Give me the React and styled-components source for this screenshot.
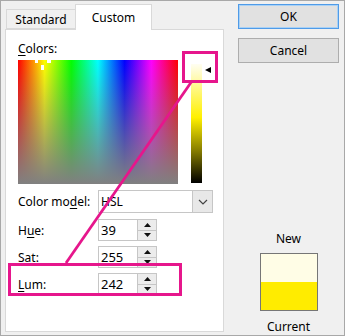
import React from 'react';
import styled, {createGlobalStyle} from 'styled-components';

const PINK = '#e6168c';

const App = () => {
  return (
    <Dialog>
      <GlobalStyle />
      <TabArea>
        <TabStrip>
          <Tab>Standard</Tab>
          <Tab active>Custom</Tab>
        </TabStrip>
        <Panel>
          <Label><u>C</u>olors:</Label>
          <PickerRow>
            <Spectrum>
              <Cross style={{left: 17, top: 0, width: 3, height: 3}} />
              <Cross style={{left: 29, top: 0, width: 4, height: 3}} />
              <Cross style={{left: 23, top: 5, width: 3, height: 5}} />
            </Spectrum>
            <LumBar />
            <LumArrow />
          </PickerRow>
          <ModelRow>
            <FieldLabel>Color mo<u>d</u>el:</FieldLabel>
            <Select>
              <SelectText>HSL</SelectText>
              <DropButton>
                <svg width="10" height="6" viewBox="0 0 10 6">
                  <path d="M1 1 L5 5 L9 1" fill="none" stroke="#444" strokeWidth="1.2" />
                </svg>
              </DropButton>
            </Select>
          </ModelRow>
          <Fields>
            <Spin label={<>H<u>u</u>e:</>} value="39" />
            <Spin label={<><u>S</u>at:</>} value="255" />
            <Spin label={<><u>L</u>um:</>} value="242" />
          </Fields>
        </Panel>
      </TabArea>
      <Side>
        <Button primary>OK</Button>
        <Button>Cancel</Button>
        <Preview>
          <PreviewLabel>New</PreviewLabel>
          <Swatch>
            <SwatchHalf color="#fffde6" />
            <SwatchHalf color="#ffec00" />
          </Swatch>
          <PreviewLabel>Current</PreviewLabel>
        </Preview>
      </Side>
      <Annotations width="345" height="336" viewBox="0 0 345 336">
        <rect x="183.5" y="52.5" width="33" height="29" fill="none" stroke={PINK} strokeWidth="3" />
        <rect x="9.5" y="264.5" width="171" height="30" fill="none" stroke={PINK} strokeWidth="3" />
        <line x1="66" y1="263" x2="192" y2="81" stroke={PINK} strokeWidth="2.8" />
      </Annotations>
    </Dialog>
  );
};

const Spin = ({label, value}) => (
  <FieldRow>
    <FieldLabel>{label}</FieldLabel>
    <SpinBox>
      <SpinText>{value}</SpinText>
      <SpinButtons>
        <SpinBtn>
          <svg width="7" height="4" viewBox="0 0 7 4"><path d="M0 4 L3.5 0 L7 4 Z" fill="#111" /></svg>
        </SpinBtn>
        <SpinBtn>
          <svg width="7" height="4" viewBox="0 0 7 4"><path d="M0 0 L3.5 4 L7 0 Z" fill="#111" /></svg>
        </SpinBtn>
      </SpinButtons>
    </SpinBox>
  </FieldRow>
);

export default App;

// styled components
const GlobalStyle = createGlobalStyle`
  body {
    margin: 0;
    background: #f0f0f0;
    font-family: "Noto Sans", "Open Sans", sans-serif;
    font-size: 12px;
    color: #000;
  }
  u { text-decoration-thickness: 1px; text-underline-offset: 2px; }
`;

const Dialog = styled.div`
  position: relative;
  box-sizing: border-box;
  width: 345px;
  height: 336px;
  border: 1px solid #a8a8a8;
  background: #f0f0f0;
  display: flex;
  padding: 2px 0 0 4px;
`;

const TabArea = styled.div`
  display: flex;
  flex-direction: column;
  width: 219px;
`;

const TabStrip = styled.div`
  display: flex;
  align-items: flex-end;
  height: 26px;
  padding-left: 1px;
  position: relative;
  z-index: 1;
`;

const Tab = styled.div`
  box-sizing: border-box;
  height: ${p => (p.active ? '26px' : '20px')};
  width: ${p => (p.active ? '77px' : '70px')};
  margin-left: ${p => (p.active ? '-1px' : '0')};
  margin-bottom: ${p => (p.active ? '-1px' : '0')};
  background: ${p => (p.active ? '#fff' : '#f0f0f0')};
  border: 1px solid #d9d9d9;
  border-bottom: ${p => (p.active ? 'none' : '1px solid #d9d9d9')};
  display: flex;
  align-items: center;
  justify-content: center;
  font-size: 12px;
  padding-top: ${p => (p.active ? '0' : '1px')};
`;

const Panel = styled.div`
  box-sizing: border-box;
  height: 303px;
  background: #fff;
  border: 1px solid #d9d9d9;
  padding: 11px 0 0 12px;
`;

const Label = styled.div`
  height: 19px;
  line-height: 16px;
`;

const PickerRow = styled.div`
  display: flex;
  align-items: flex-start;
`;

const Spectrum = styled.div`
  position: relative;
  width: 160px;
  height: 124px;
  background:
    linear-gradient(to bottom, rgba(128,128,128,0), #808080),
    linear-gradient(to right, #f00, #ff0 16.6%, #0f0 33.3%, #0ff 50%, #00f 66.6%, #f0f 83.3%, #f00);
`;

const Cross = styled.span`
  position: absolute;
  background: #fff;
`;

const LumBar = styled.div`
  width: 11px;
  height: 119px;
  margin: 4px 0 0 13px;
  background: linear-gradient(to bottom, #fffef2, #fff000 45%, #8a8000 72%, #000);
`;

const LumArrow = styled.div`
  width: 0;
  height: 0;
  margin: 7px 0 0 3px;
  border-top: 3.5px solid transparent;
  border-bottom: 3.5px solid transparent;
  border-right: 6px solid #000;
`;

const ModelRow = styled.div`
  display: flex;
  align-items: center;
  margin-top: 6px;
  height: 23px;
`;

const FieldLabel = styled.div`
  width: 80px;
`;

const Select = styled.div`
  box-sizing: border-box;
  width: 115px;
  height: 23px;
  border: 1px solid #c6c6c6;
  display: flex;
  align-items: stretch;
`;

const SelectText = styled.div`
  flex: 1;
  padding-left: 2px;
  display: flex;
  align-items: center;
`;

const DropButton = styled.div`
  width: 19px;
  background: #e8e8e8;
  border-left: 1px solid #c6c6c6;
  display: flex;
  align-items: center;
  justify-content: center;
`;

const Fields = styled.div`
  display: flex;
  flex-direction: column;
  gap: 5px;
  margin-top: 6px;
`;

const FieldRow = styled.div`
  display: flex;
  align-items: center;
  height: 22px;
`;

const SpinBox = styled.div`
  box-sizing: border-box;
  width: 59px;
  height: 22px;
  border: 1px solid #c6c6c6;
  display: flex;
`;

const SpinText = styled.div`
  flex: 1;
  display: flex;
  align-items: center;
  padding-left: 2px;
  font-size: 13px;
`;

const SpinButtons = styled.div`
  width: 18px;
  display: flex;
  flex-direction: column;
  border-left: 1px solid #c6c6c6;
`;

const SpinBtn = styled.div`
  flex: 1;
  display: flex;
  align-items: center;
  justify-content: center;
  background: #ececec;
  & + & { border-top: 1px solid #c6c6c6; }
`;

const Side = styled.div`
  display: flex;
  flex-direction: column;
  align-items: center;
  width: 101px;
  margin-left: 14px;
  padding-top: 1px;
`;

const Button = styled.div`
  box-sizing: border-box;
  width: 101px;
  height: 26px;
  margin-bottom: 9px;
  background: #e1e1e1;
  border: 1px solid ${p => (p.primary ? '#4f9be8' : '#adadad')};
  box-shadow: ${p => (p.primary ? 'inset 0 0 0 1px #a9d1f5' : 'none')};
  display: flex;
  align-items: center;
  justify-content: center;
`;

const Preview = styled.div`
  margin-top: 159px;
  display: flex;
  flex-direction: column;
  align-items: center;
`;

const PreviewLabel = styled.div`
  height: 16px;
  line-height: 16px;
`;

const Swatch = styled.div`
  box-sizing: border-box;
  width: 58px;
  height: 58px;
  margin: 6px 0 8px;
  border: 1px solid #767676;
  display: flex;
  flex-direction: column;
`;

const SwatchHalf = styled.div`
  flex: 1;
  background: ${p => p.color};
`;

const Annotations = styled.svg`
  position: absolute;
  left: -1px;
  top: -1px;
  pointer-events: none;
`;
